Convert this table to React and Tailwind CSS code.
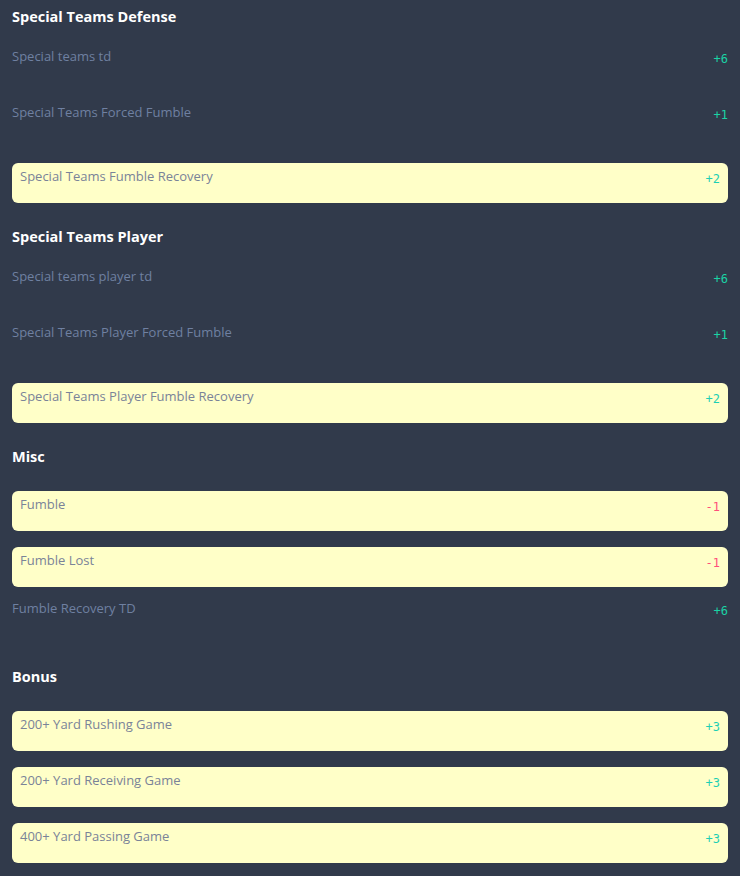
const sections = [
  {
    title: "Special Teams Defense",
    rows: [
      { label: "Special teams td", value: "+6" },
      { label: "Special Teams Forced Fumble", value: "+1" },
      { label: "Special Teams Fumble Recovery", value: "+2", hl: true },
    ],
  },
  {
    title: "Special Teams Player",
    rows: [
      { label: "Special teams player td", value: "+6" },
      { label: "Special Teams Player Forced Fumble", value: "+1" },
      { label: "Special Teams Player Fumble Recovery", value: "+2", hl: true },
    ],
  },
  {
    title: "Misc",
    rows: [
      { label: "Fumble", value: "-1", hl: true },
      { label: "Fumble Lost", value: "-1", hl: true },
      { label: "Fumble Recovery TD", value: "+6" },
    ],
  },
  {
    title: "Bonus",
    rows: [
      { label: "200+ Yard Rushing Game", value: "+3", hl: true },
      { label: "200+ Yard Receiving Game", value: "+3", hl: true },
      { label: "400+ Yard Passing Game", value: "+3", hl: true },
    ],
  },
];

function Row({ label, value, hl }) {
  const neg = value.startsWith("-");
  return (
    <div
      className={
        hl
          ? "flex justify-between h-10 mb-4 rounded-md bg-[#ffffc8] px-2 pt-2"
          : "flex justify-between h-10 mb-4"
      }
    >
      <span
        className={
          "text-[13px] leading-[10px] font-medium " +
          (hl ? "text-[#7a8398]" : "text-[#6f80a1]")
        }
      >
        {label}
      </span>
      <span
        className={
          "font-['DejaVu_Sans_Mono',monospace] text-[12px] leading-3 mt-[2px] " +
          (neg ? "text-[#ff4f7b]" : hl ? "text-[#1dcfb4]" : "text-[#1ad3a5]")
        }
      >
        {value}
      </span>
    </div>
  );
}

export default function App() {
  return (
    <div className="min-h-[876px] bg-[#313a4b] px-3 font-['Open_Sans',sans-serif] overflow-hidden">
      <div className="mt-[-1px]">
        {sections.map((s) => (
          <div key={s.title}>
            <h2 className="py-2 mb-4 text-[14.5px] leading-5 font-bold text-white">{s.title}</h2>
            {s.rows.map((r) => (
              <Row key={r.label} {...r} />
            ))}
          </div>
        ))}
      </div>
    </div>
  );
}
